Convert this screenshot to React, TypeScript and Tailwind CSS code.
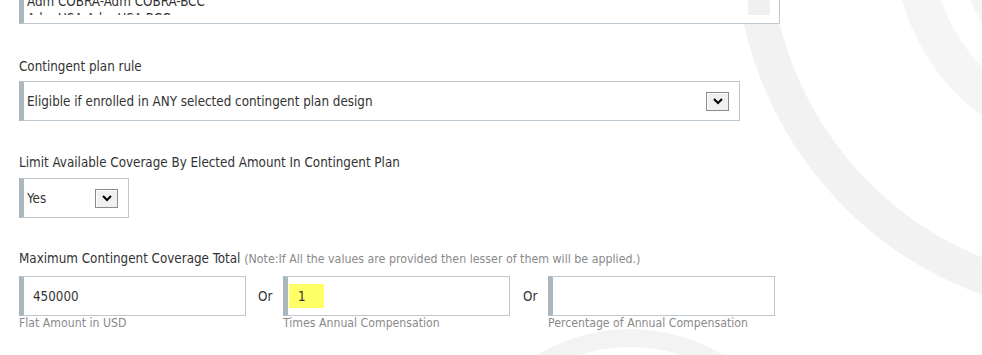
import React from "react";

const FONT = "font-['DejaVu_Sans_Condensed','DejaVu_Sans',sans-serif]";

function Chevron() {
  return (
    <svg width="10" height="7" viewBox="0 0 10 7" className="block">
      <polyline points="1,1 5,5 9,1" fill="none" stroke="#000" strokeWidth="2" />
    </svg>
  );
}

function DropButton() {
  return (
    <div className="ml-auto mr-[10px] flex h-[19px] w-[23px] items-center justify-center border border-[#8c8c8c] bg-[#f0f0f0] shadow-[inset_1px_1px_0_#ffffff]">
      <Chevron />
    </div>
  );
}

function Field({ value, highlight, sub }: { value?: string; highlight?: boolean; sub: string }) {
  return (
    <div className="flex w-[227px] flex-col">
      <div className="flex h-[40px] items-center border border-[#bcc7cf] border-l-[5px] border-l-[#abb7bf] bg-white">
        {highlight ? (
          <div className="ml-[1px] flex h-[24px] w-[35px] items-center bg-[#ffff66] pl-[9px]">{value}</div>
        ) : (
          <div className="pl-[9px]">{value}</div>
        )}
      </div>
      <div className="mt-[1px] text-[12.2px] leading-[13px] text-[#8a8a8a]">{sub}</div>
    </div>
  );
}

export default function App() {
  return (
    <div className={`relative h-[355px] w-[982px] overflow-hidden bg-white ${FONT} text-[13.3px] leading-[15px] text-[#333333]`}>
      <svg className="absolute inset-0" width="982" height="355" viewBox="0 0 982 355">
        <circle cx="1109" cy="-57" r="356.5" fill="none" stroke="#f2f2f2" strokeWidth="35" />
        <circle cx="1109" cy="-57" r="196" fill="none" stroke="#f5f5f5" strokeWidth="37" />
        <circle cx="1109" cy="-57" r="132" fill="none" stroke="#f5f5f5" strokeWidth="36" />
        <circle cx="630" cy="508" r="170" fill="none" stroke="#f3f3f3" strokeWidth="18" />
      </svg>

      <div className="relative pl-[19px]">
        {/* list box, partly scrolled off the top */}
        <div className="mt-[-40px] flex h-[64px] w-[761px] border border-[#bcc7cf] border-l-[5px] border-l-[#abb7bf] bg-white">
          <div className="h-[54px] flex-1 overflow-hidden pl-[3px] pt-[15px] leading-[17px]">
            <div>Adm CAN-Adm CAN-BCC</div>
            <div>Adm COBRA-Adm COBRA-BCC</div>
            <div>Adm USA-Adm USA-BCC</div>
          </div>
          <div className="mr-[9px] h-[54px] w-[22px] bg-[#f0f0f0]" />
        </div>

        <div className="mt-[35px]">Contingent plan rule</div>
        <div className="mt-[7px] flex h-[40px] w-[721px] items-center border border-[#bcc7cf] border-l-[5px] border-l-[#abb7bf] bg-white">
          <div className="pl-[3px]">Eligible if enrolled in ANY selected contingent plan design</div>
          <DropButton />
        </div>

        <div className="mt-[34px]">Limit Available Coverage By Elected Amount In Contingent Plan</div>
        <div className="mt-[8px] flex h-[40px] w-[110px] items-center border border-[#bcc7cf] border-l-[5px] border-l-[#abb7bf] bg-white">
          <div className="pl-[3px]">Yes</div>
          <DropButton />
        </div>

        <div className="mt-[33px]">
          Maximum Contingent Coverage Total{" "}
          <span className="text-[12.3px] text-[#8a8a8a]">
            (Note:If All the values are provided then lesser of them will be applied.)
          </span>
        </div>
        <div className="mt-[9px] flex items-start">
          <Field value="450000" sub="Flat Amount in USD" />
          <div className="flex h-[40px] w-[37px] items-center pl-[12px]">Or</div>
          <Field value="1" highlight sub="Times Annual Compensation" />
          <div className="flex h-[40px] w-[38px] items-center pl-[13px]">Or</div>
          <Field sub="Percentage of Annual Compensation" />
        </div>
      </div>
    </div>
  );
}
